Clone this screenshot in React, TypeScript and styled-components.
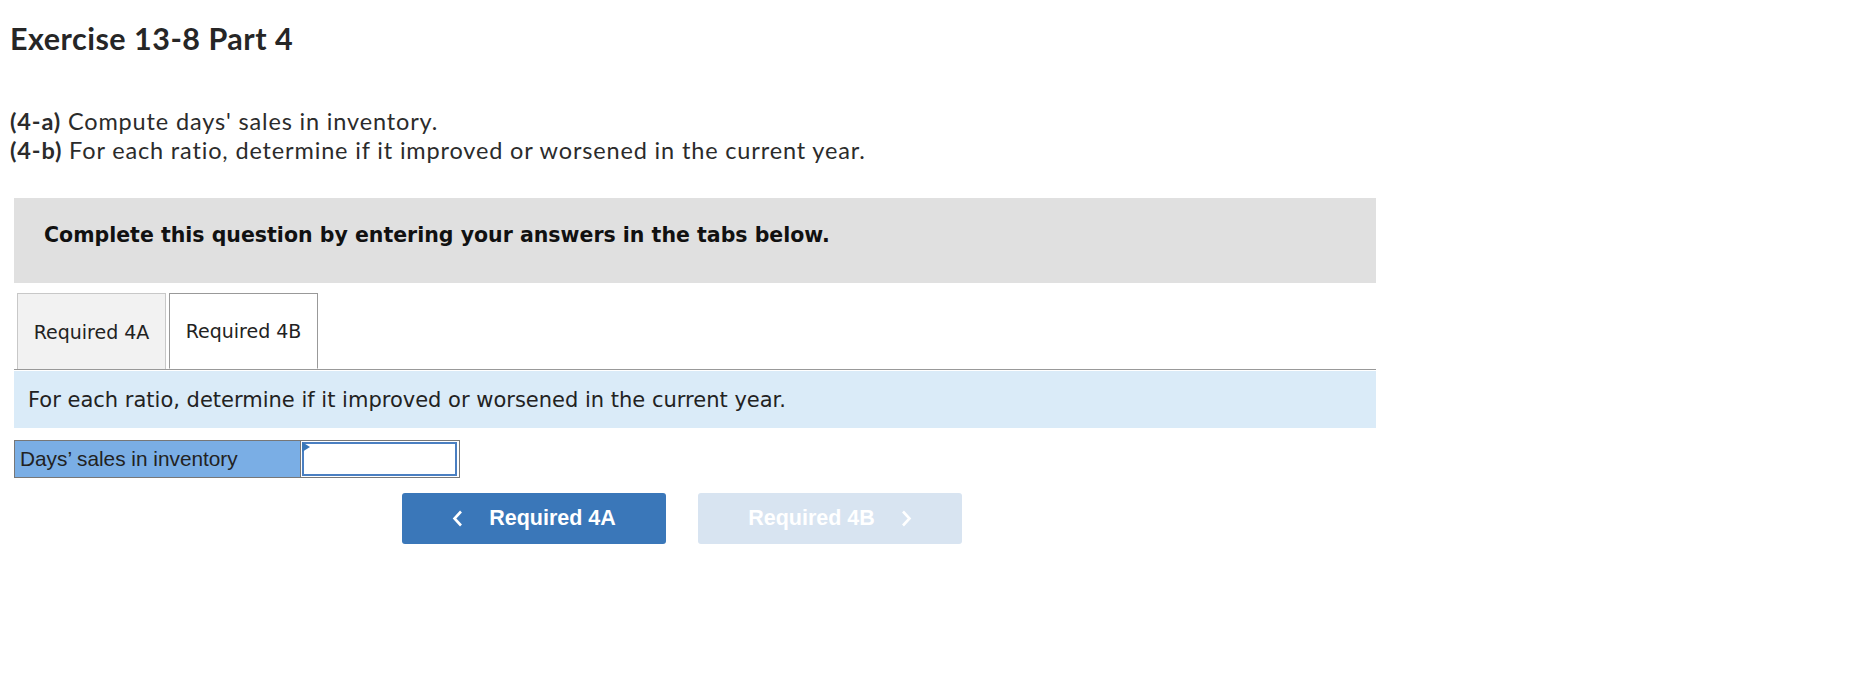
import styled, { createGlobalStyle } from "styled-components";

const GlobalStyle = createGlobalStyle`
  html, body {
    margin: 0;
    padding: 0;
    background: #ffffff;
  }
`;

const Page = styled.div`
  padding: 18px 0 0 10px;
  font-family: Lato, "Liberation Sans", sans-serif;
  color: #222;
`;

const Title = styled.h1`
  margin: 0;
  font-size: 30.5px;
  font-weight: 700;
  letter-spacing: 0.5px;
  line-height: 40px;
  color: #262626;
`;

const Instructions = styled.div`
  margin-top: 49px;
  font-size: 23.5px;
  letter-spacing: 0.85px;
  line-height: 29px;
  color: #2b2b2b;

  b {
    font-weight: 700;
  }
`;

const Question = styled.div`
  width: 1362px;
  margin: 33px 0 0 4px;
`;

const Banner = styled.div`
  height: 85px;
  background: #e0e0e0;
  display: flex;
  align-items: center;
  padding: 0 0 12px 30px;
  box-sizing: border-box;
  font-family: "DejaVu Sans", Verdana, sans-serif;
  font-weight: 700;
  font-size: 20.5px;
  color: #111;
`;

const TabList = styled.div`
  display: flex;
  gap: 3px;
  margin-top: 10px;
  padding-left: 3px;
  border-bottom: 1px solid #999;
`;

const Tab = styled.div<{ $active?: boolean }>`
  width: 149px;
  height: 76px;
  box-sizing: border-box;
  display: flex;
  align-items: center;
  justify-content: center;
  font-family: "DejaVu Sans", Verdana, sans-serif;
  font-size: 19px;
  color: #222;
  background: ${(p) => (p.$active ? "#ffffff" : "#f2f2f2")};
  border: 1px solid ${(p) => (p.$active ? "#999" : "#c8c8c8")};
  border-bottom: ${(p) => (p.$active ? "1px solid #ffffff" : "none")};
  margin-bottom: ${(p) => (p.$active ? "-1px" : "0")};
`;

const Prompt = styled.div`
  height: 57px;
  margin-top: 1px;
  background: #daebf8;
  display: flex;
  align-items: center;
  padding-left: 14px;
  font-family: "DejaVu Sans", Verdana, sans-serif;
  font-size: 21px;
  color: #222;
`;

const AnswerRow = styled.div`
  display: flex;
  width: 446px;
  height: 38px;
  margin-top: 12px;
  box-sizing: border-box;
  border: 1px solid #777;
`;

const Label = styled.div`
  width: 286px;
  background: #7aaee5;
  display: flex;
  align-items: center;
  padding-left: 5px;
  box-sizing: border-box;
  border-right: 1px solid #777;
  font-family: "Liberation Sans", Arial, sans-serif;
  font-size: 20.8px;
  color: #222;
`;

const InputCell = styled.div`
  position: relative;
  flex: 1;
  padding: 1px 2px 1px 1px;
`;

const Input = styled.input`
  width: 100%;
  height: 100%;
  box-sizing: border-box;
  border: 2px solid #4a7fc1;
  outline: none;
  background: #fff;
  margin: 0;
`;

const Marker = styled.span`
  position: absolute;
  top: 1px;
  left: 1px;
  width: 0;
  height: 0;
  border-top: 5px solid transparent;
  border-bottom: 5px solid transparent;
  border-left: 8px solid #3a77b8;
`;

const NavRow = styled.div`
  display: flex;
  gap: 32px;
  margin-top: 15px;
  padding-left: 388px;
`;

const NavButton = styled.button<{ $disabled?: boolean }>`
  width: 264px;
  height: 51px;
  border: none;
  border-radius: 3px;
  display: flex;
  align-items: center;
  justify-content: center;
  gap: 26px;
  font-family: "Liberation Sans", Arial, sans-serif;
  font-weight: 700;
  font-size: 21.5px;
  color: #ffffff;
  background: ${(p) => (p.$disabled ? "#d8e4f1" : "#3a77b9")};
  cursor: ${(p) => (p.$disabled ? "default" : "pointer")};
  padding: 0;

  svg {
    flex: none;
  }
`;

const Chevron = ({ dir }: { dir: "left" | "right" }) => (
  <svg width="11" height="17" viewBox="0 0 11 17">
    <path
      d={dir === "left" ? "M9 1.5 L2.5 8.5 L9 15.5" : "M2 1.5 L8.5 8.5 L2 15.5"}
      fill="none"
      stroke="#ffffff"
      strokeWidth="2.6"
    />
  </svg>
);

export default function App() {
  return (
    <>
      <GlobalStyle />
      <Page>
        <Title>Exercise 13-8 Part 4</Title>
        <Instructions>
          <div>
            <b>(4-a)</b> Compute days' sales in inventory.
          </div>
          <div>
            <b>(4-b)</b> For each ratio, determine if it improved or worsened in the current year.
          </div>
        </Instructions>
        <Question>
          <Banner>Complete this question by entering your answers in the tabs below.</Banner>
          <TabList>
            <Tab>Required 4A</Tab>
            <Tab $active>Required 4B</Tab>
          </TabList>
          <Prompt>For each ratio, determine if it improved or worsened in the current year.</Prompt>
          <AnswerRow>
            <Label>Days’ sales in inventory</Label>
            <InputCell>
              <Input type="text" />
              <Marker />
            </InputCell>
          </AnswerRow>
          <NavRow>
            <NavButton>
              <Chevron dir="left" />
              Required 4A
            </NavButton>
            <NavButton $disabled disabled>
              Required 4B
              <Chevron dir="right" />
            </NavButton>
          </NavRow>
        </Question>
      </Page>
    </>
  );
}
